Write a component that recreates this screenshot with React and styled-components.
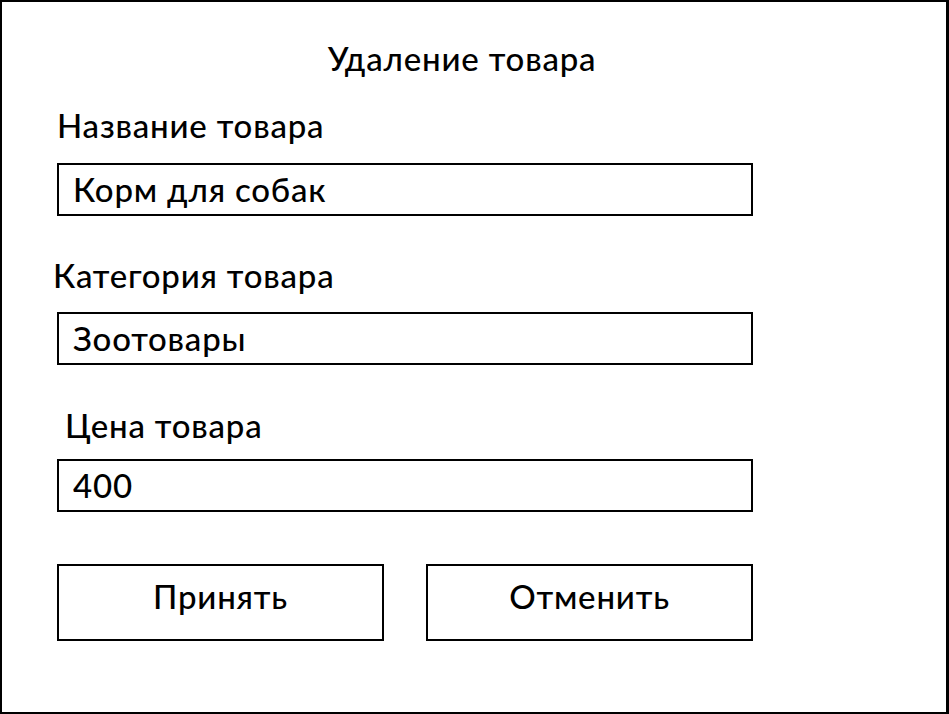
import React from "react";
import styled, { createGlobalStyle } from "styled-components";

const Global = createGlobalStyle`
  html, body {
    margin: 0;
    padding: 0;
    background: #ffffff;
  }
  * { box-sizing: border-box; }
`;

const font = `
  font-family: Lato, "Liberation Sans", sans-serif;
  font-size: 33px;
  font-weight: 500;
  letter-spacing: 0.8px;
  color: #000;
`;

const Frame = styled.div`
  width: 949px;
  height: 714px;
  border: 2px solid #000;
  border-right-width: 3px;
  background: #fff;
  display: flex;
  flex-direction: column;
  padding-top: 36px;
  ${font}
`;

const Title = styled.h1`
  margin: 0;
  padding-right: 24px;
  text-align: center;
  line-height: 40px;
  ${font}
`;

const Form = styled.div`
  display: flex;
  flex-direction: column;
  padding-left: 55px;
  width: 751px;
`;

const Label = styled.label`
  display: block;
  line-height: 40px;
  margin-top: ${(p) => p.$top}px;
  margin-left: ${(p) => p.$indent || 0}px;
`;

const TextBox = styled.input`
  display: block;
  width: 696px;
  height: 53px;
  margin: ${(p) => p.$top}px 0 0 0;
  padding: 0 0 2px 14px;
  border: 2px solid #000;
  border-radius: 0;
  background: #fff;
  outline: none;
  ${font}
`;

const ButtonRow = styled.div`
  display: flex;
  gap: 42px;
  margin-top: 52px;
`;

const Button = styled.button`
  width: 327px;
  height: 77px;
  border: 2px solid #000;
  border-radius: 0;
  background: #fff;
  padding: 0 0 13px 0;
  line-height: 40px;
  display: flex;
  align-items: center;
  justify-content: center;
  cursor: pointer;
  ${font}
`;

const fields = [
  { label: "Название товара", value: "Корм для собак", labelTop: 27, indent: 0, boxTop: 18 },
  { label: "Категория товара", value: "Зоотовары", labelTop: 39, indent: -4, boxTop: 17 },
  { label: "Цена товара", value: "400", labelTop: 40, indent: 8, boxTop: 14 },
];

export default function App() {
  return (
    <>
      <Global />
      <Frame>
        <Title>Удаление товара</Title>
        <Form>
          {fields.map((f) => (
            <React.Fragment key={f.label}>
              <Label $top={f.labelTop} $indent={f.indent}>
                {f.label}
              </Label>
              <TextBox $top={f.boxTop} readOnly defaultValue={f.value} />
            </React.Fragment>
          ))}
          <ButtonRow>
            <Button type="button">Принять</Button>
            <Button type="button">Отменить</Button>
          </ButtonRow>
        </Form>
      </Frame>
    </>
  );
}
